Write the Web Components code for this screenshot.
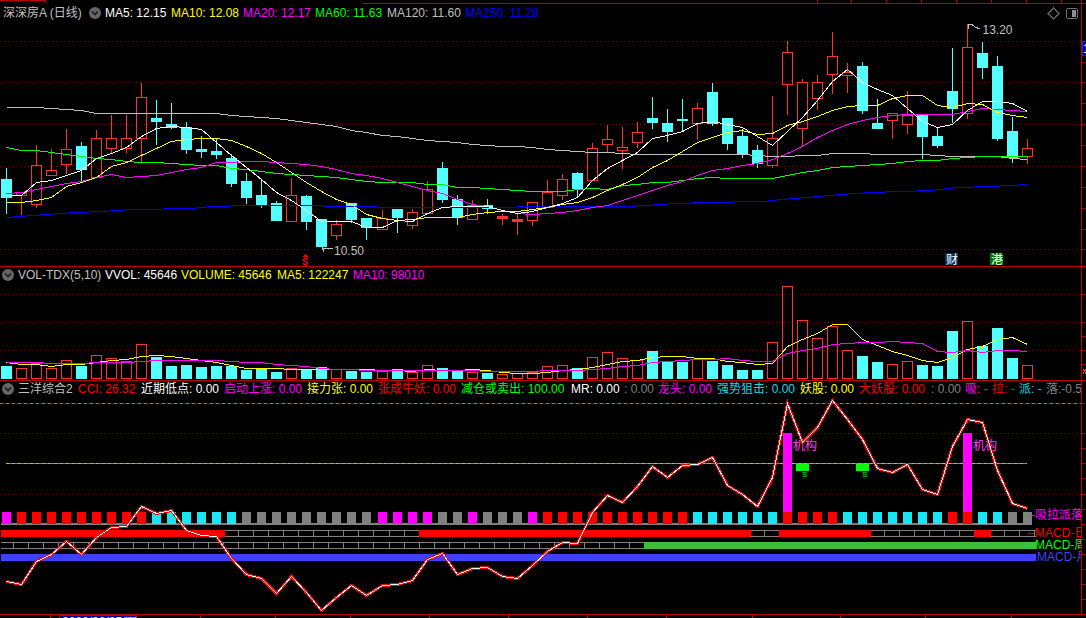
<!DOCTYPE html>
<html>
<head>
<meta charset="utf-8">
<title>深深房A</title>
<style>
	html, body { margin: 0; background: #000; }
</style>
</head>
<body>

<stock-chart>
	<kline-pane top="0" height="267">
		<legend-row pad="3" first="6">
			<legend-item w="86" color="#c0c0c0">深深房A (日线)</legend-item>
			<collapse-btn></collapse-btn>
			<legend-item w="66" color="#ffffff">MA5: 12.15</legend-item>
			<legend-item w="72" color="#ffff00">MA10: 12.08</legend-item>
			<legend-item w="72" color="#ff00ff">MA20: 12.17</legend-item>
			<legend-item w="72" color="#00ff00">MA60: 11.63</legend-item>
			<legend-item w="78" color="#c0c0c0">MA120: 11.60</legend-item>
			<legend-item w="80" color="#0000ff">MA250: 11.28</legend-item>
		</legend-row>
	</kline-pane>
	<vol-pane top="267" height="114">
		<legend-row pad="2" first="1">
			<collapse-btn></collapse-btn>
			<legend-item w="87" color="#c0c0c0">VOL-TDX(5,10)</legend-item>
			<legend-item w="76" color="#ffffff">VVOL: 45646</legend-item>
			<legend-item w="96" color="#ffff00">VOLUME: 45646</legend-item>
			<legend-item w="76" color="#ffff00">MA5: 122247</legend-item>
			<legend-item w="80" color="#ff00ff">MA10: 98010</legend-item>
		</legend-row>
	</vol-pane>
	<sanyang-pane top="381" height="233">
		<legend-row pad="2" first="1">
			<collapse-btn></collapse-btn>
			<legend-item w="60" color="#c0c0c0">三洋综合2</legend-item>
			<legend-item w="63" color="#ff0000">CCI: 26.32</legend-item>
			<legend-item w="83" color="#ffffff">近期低点: 0.00</legend-item>
			<legend-item w="83" color="#ff00ff">启动上涨: 0.00</legend-item>
			<legend-item w="71" color="#ffff00">接力张: 0.00</legend-item>
			<legend-item w="83" color="#ff0000">张成牛妖: 0.00</legend-item>
			<legend-item w="110" color="#00ff00">减仓或卖出: 100.00</legend-item>
			<legend-item w="53" color="#ffffff">MR: 0.00</legend-item>
			<legend-item w="34" color="#808080">: 0.00</legend-item>
			<legend-item w="59" color="#ff00ff">龙头: 0.00</legend-item>
			<legend-item w="83" color="#14d8e8">强势狙击: 0.00</legend-item>
			<legend-item w="59" color="#ffff00">妖股: 0.00</legend-item>
			<legend-item w="72" color="#ff0000">大妖股: 0.00</legend-item>
			<legend-item w="34" color="#808080">: 0.00</legend-item>
			<legend-item w="27" color="#ff00ff">吸: -</legend-item>
			<legend-item w="27" color="#ff0000">拉: -</legend-item>
			<legend-item w="27" color="#14d8e8">派: -</legend-item>
			<legend-item w="36" color="#808080">落:-0.5</legend-item>
		</legend-row>
	</sanyang-pane>
	<time-axis></time-axis>
</stock-chart>

<script>
const RED = '#ff3232';
const CYAN = '#54ffff';
const AXIS = '#c00000';
const GRID = '#8c0000';

// high, body top, body bottom, low, kind (0 cyan, 1 hollow red, 2 solid red)
const CANDLES = [
	[168,179,197,213,0],[192,192,195,214,1],[145,165,204,207,1],[149,170,175,175,1],[129,149,164,173,1],
	[142,146,169,180,0],[130,138,177,177,1],[115,138,148,153,1],[115,138,148,152,1],[83,97,138,162,1],
	[100,118,121,144,0],[103,124,127,128,0],[122,127,149,153,0],[136,149,151,157,0],[139,151,154,158,0],
	[154,158,183,186,0],[173,181,197,203,0],[180,195,205,207,0],[201,203,220,220,0],[178,195,221,221,1],
	[195,196,221,229,0],[219,219,246,246,0],[220,224,235,239,1],[203,203,219,222,0],[218,218,227,239,0],
	[210,218,229,229,1],[209,209,217,232,0],[209,212,225,228,1],[181,189,213,213,1],[162,168,199,202,0],
	[195,199,217,224,0],[200,205,219,219,1],[199,205,208,213,0],[214,216,218,224,2],[213,219,221,234,2],
	[202,202,220,225,1],[180,192,207,207,1],[174,179,195,199,1],[172,173,188,197,0],[143,148,180,180,1],
	[125,139,144,152,1],[127,147,150,168,1],[122,132,142,147,1],[97,118,122,128,0],[109,123,131,141,0],
	[99,119,120,130,0],[103,108,123,139,1],[83,92,123,125,0],[118,118,143,149,0],[129,136,153,157,0],
	[145,150,163,167,0],[96,138,165,167,1],[41,52,84,114,1],[79,82,128,145,1],[75,82,98,109,1],
	[32,56,74,93,1],[63,72,75,92,1],[62,66,110,113,0],[99,123,128,128,0],[113,113,120,138,1],
	[91,115,124,133,1],[115,115,136,158,0],[127,136,145,147,0],[48,91,108,122,0],[24,47,113,118,1],
	[42,53,67,78,0],[56,66,138,140,0],[117,131,157,162,0],[139,148,156,163,1],
];

const MA5 = [195,195,182,180,175,170,158,153,147,136,128,126,127,129,142,155,167,179,192,200,210,221,221,221,227,227,220,221,213,207,206,206,206,210,213,211,207,203,197,180,168,160,152,138,135,131,123,121,124,127,136,145,131,117,100,81,69,82,89,95,108,121,127,124,110,101,101,103,111];
const MA10 = [202,202,200,197,186,182,177,166,162,155,148,141,139,138,138,140,146,153,162,172,182,191,199,204,214,218,220,219,217,217,217,214,212,211,211,209,207,204,202,197,190,184,177,167,160,151,142,137,132,130,134,133,125,121,116,110,106,105,105,98,95,95,105,107,103,104,112,115,117];
const MA20 = [193,192,189,186,183,181,177,174,177,176,175,172,169,167,162,162,161,161,162,163,164,166,169,173,175,178,182,186,190,193,199,204,206,210,213,214,213,212,210,207,205,200,195,190,185,181,175,170,168,165,163,159,153,146,137,130,124,120,117,115,114,114,114,114,111,108,109,110,111];
const MA60 = [147,150,150,152,154,156,158,159,161,162,162,163,164,165,165,168,169,171,173,174,175,176,177,179,181,182,182,182,184,184,187,187,188,189,190,191,191,191,189,188,189,185,184,182,182,180,178,177,178,178,178,178,175,172,170,167,166,165,164,163,161,160,160,158,157,156,156,156,156];
const MA120 = [107,107,107,108,109,110,113,113,113,113,113,113,113,113,113,115,116,117,118,120,122,124,126,130,132,135,136,138,140,141,142,144,145,146,146,147,149,150,151,152,152,153,154,154,154,154,154,154,154,154,155,156,156,155,155,153,153,153,154,154,154,154,155,156,156,156,156,158,159];

// blue line has long flat steps, so it keeps free x coordinates
const MA250 = '6,217.5 60,213.5 75,212.5 103,211.5 133,209.5 193,208.5 210,206.5 253,205.5 297,205.5 405,207.5 628,206.5 662,204.5 675,203.5 705,202.5 764,201.5 781,199.5 807,197.5 841,194.5 871,192.5 901,191.5 931,190.5 957,187.5 991,186.5 1027,184.5';

const VOL = [
	[366,0],[368,1],[363,1],[368,1],[360,1],[366,0],[355,1],[358,1],[361,1],[344,1],
	[357,0],[366,0],[365,0],[367,0],[366,0],[366,0],[370,0],[369,0],[372,0],[368,1],
	[370,0],[367,0],[369,1],[371,0],[372,0],[371,1],[369,0],[372,1],[365,1],[368,0],
	[370,0],[372,1],[373,0],[374,1],[373,1],[372,1],[366,1],[365,1],[368,0],[357,1],
	[352,1],[358,1],[360,1],[351,0],[362,0],[362,0],[359,1],[361,0],[365,0],[370,0],
	[370,0],[342,1],[286,1],[320,1],[338,1],[326,1],[350,1],[356,0],[362,0],[364,1],
	[361,1],[365,0],[366,0],[331,0],[321,1],[346,0],[328,0],[358,0],[365,1],
];
// volume averages were read in 3x zoom units, scale() brings them to pixels
const VOL_MA5 = [518,522,522,528,523,522,517,512,508,499,496,500,505,510,518,527,534,535,534,537,537,537,537,539,539,542,542,543,539,540,540,539,542,546,550,550,546,541,539,533,524,513,510,503,499,499,505,505,514,518,524,519,470,449,430,404,402,448,467,483,497,510,517,501,478,468,447,442,462];
const VOL_MA10 = [518,518,518,519,519,520,517,516,516,514,510,510,510,510,512,513,517,518,522,525,530,535,537,538,541,541,541,541,540,540,540,541,543,544,545,545,542,542,542,538,534,530,527,517,514,512,509,507,506,510,515,514,490,482,475,464,461,457,457,455,456,460,483,488,482,486,482,482,484];

const CCI = [615,625,555,535,495,534,485,453,451,391,412,403,463,478,482,548,596,608,653,601,650,704,665,627,657,628,625,614,550,531,595,578,573,600,608,568,525,498,502,410,357,380,332,270,305,267,265,245,327,354,392,305,82,200,155,73,130,190,277,290,265,340,354,210,130,140,283,383,397];

// block colours for 吸拉派落: m magenta, r red, c cyan, g gray
const BLOCKS = 'mrrrrrrrrrccccccggggggggg' + 'mmmmggmgggm' + 'rrrrrrrrrr' + 'cccccc' + 'rrrr' + 'ccccccc' + 'rr' + 'cc' + 'gg';
const BLOCK_COLOR = { m: '#ff00ff', r: '#ff0000', c: '#19e6f0', g: '#808080' };

const cx = (i) => Math.round(6 + 15.02 * i);

const polyline = (values, color, width = 1) => {
	const points = values.map((y, i) => `${cx(i) + 0.5},${Math.floor(y) + 0.5}`).join(' ');
	return `<polyline points="${points}" fill="none" stroke="${color}" stroke-width="${width}"/>`;
};

const dotted = (y, x1 = 0, x2 = 1081) => `<line x1="${x1}" x2="${x2}" y1="${y + 0.5}" y2="${y + 0.5}" stroke="${GRID}" stroke-dasharray="1 3"/>`;

const rect = (x, y, w, h, fill) => `<rect x="${x}" y="${y}" width="${w}" height="${h}" fill="${fill}"/>`;

const hollow = (x, y, w, h, color) => `<rect x="${x + 0.5}" y="${y + 0.5}" width="${w - 1}" height="${h - 1}" fill="none" stroke="${color}"/>`;

const ticks = (list, len = 4) => list.map((y) => rect(1081, y, len, 1, AXIS)).join('');

const legendTemplate = document.createElement('template');
legendTemplate.innerHTML = `
	<style>
		:host {
			display: block;
			flex: 0 0 var(--w, auto);
			color: var(--c, #c0c0c0);
			white-space: nowrap;
			overflow: hidden;
		}
	</style>
	<slot></slot>
`;

class LegendItem extends HTMLElement {

	constructor() {
		super();

		this.attachShadow({ mode: 'open' });
		this.shadowRoot.appendChild(legendTemplate.content.cloneNode(true));
	}

	connectedCallback() {
		this.style.setProperty('--w', this.getAttribute('w') + 'px');
		this.style.setProperty('--c', this.getAttribute('color'));
	}

}

const rowTemplate = document.createElement('template');
rowTemplate.innerHTML = `
	<style>
		:host {
			display: flex;
			align-items: center;
			width: 1081px;
			height: 14px;
			box-sizing: content-box;
			overflow: hidden;
			font: 12px/14px "Liberation Sans", "Noto Sans CJK SC", sans-serif;
		}
	</style>
	<slot></slot>
`;

class LegendRow extends HTMLElement {

	constructor() {
		super();

		this.attachShadow({ mode: 'open' });
		this.shadowRoot.appendChild(rowTemplate.content.cloneNode(true));
	}

	connectedCallback() {
		this.style.paddingLeft = this.getAttribute('pad') + 'px';
		this.style.paddingTop = this.getAttribute('first') + 'px';
		this.style.width = (1081 - Number(this.getAttribute('pad'))) + 'px';
	}

}

const btnTemplate = document.createElement('template');
btnTemplate.innerHTML = `
	<style>
		:host {
			display: block;
			flex: 0 0 12px;
			height: 12px;
			margin-right: 4px;
		}
		svg { display: block; }
	</style>
	<svg width="12" height="12" viewBox="0 0 12 12">
		<circle cx="6" cy="6" r="6" fill="#666"/>
		<path d="M3 4.5 L6 7.5 L9 4.5" fill="none" stroke="#1c1c1c" stroke-width="1.6"/>
	</svg>
`;

class CollapseBtn extends HTMLElement {

	constructor() {
		super();

		this.attachShadow({ mode: 'open' });
		this.shadowRoot.appendChild(btnTemplate.content.cloneNode(true));
	}

}

const paneTemplate = document.createElement('template');
paneTemplate.innerHTML = `
	<style>
		:host {
			display: grid;
			width: 1086px;
			overflow: hidden;
		}
		svg, .legend {
			grid-area: 1 / 1;
		}
		svg {
			display: block;
			shape-rendering: crispEdges;
		}
		svg text {
			font: 12px "Liberation Sans", "Noto Sans CJK SC", sans-serif;
		}
		.legend {
			align-self: start;
		}
	</style>
	<svg width="1086" xmlns="http://www.w3.org/2000/svg"></svg>
	<div class="legend"><slot></slot></div>
`;

class ChartPane extends HTMLElement {

	constructor() {
		super();

		this.attachShadow({ mode: 'open' });
		this.shadowRoot.appendChild(paneTemplate.content.cloneNode(true));
		this.svg = this.shadowRoot.querySelector('svg');
	}

	connectedCallback() {
		const top = Number(this.getAttribute('top'));
		const height = Number(this.getAttribute('height'));

		this.style.height = height + 'px';
		this.svg.setAttribute('height', height);
		this.svg.setAttribute('viewBox', `0 ${top} 1086 ${height}`);
		this.svg.innerHTML = this.draw() + rect(1081, top, 1, height, AXIS);
	}

	draw() {
		return '';
	}

}

class KlinePane extends ChartPane {

	draw() {
		let out = '';

		out += rect(0, 0, 45, 1, AXIS) + rect(45, 0, 1, 3, AXIS);
		out += rect(362, 3, 724, 1, AXIS);
		for (const x of [817, 851, 886, 921, 956, 991, 1026, 1061]) out += rect(x, 0, 1, 3, AXIS);
		out += ticks([62, 82, 103, 124, 145, 166, 187, 208, 229, 249]);
		out += rect(0, 266, 1086, 1, AXIS);

		for (const y of [41, 82, 124, 166, 249]) out += dotted(y);

		CANDLES.forEach(([high, top, bottom, low, kind], i) => {
			const x = cx(i);
			const color = kind === 0 ? CYAN : RED;

			out += rect(x, high, 1, top - high, color);
			out += rect(x, bottom, 1, low - bottom + 1, color);

			if (kind === 1) {
				out += hollow(x - 5, top, 11, bottom - top + 1, color);
			} else {
				out += rect(x - 5, top, 11, bottom - top + 1, color);
			}
		});

		out += polyline(MA120, '#c0c0c0');
		out += polyline(MA60, '#00ff00');
		out += `<polyline points="${MA250}" fill="none" stroke="#0000ff"/>`;
		out += polyline(MA20, '#ff00ff');
		out += polyline(MA10, '#ffff00');
		out += polyline(MA5, '#ffffff');

		// high and low flags
		out += `<path d="M968.5 29 V24.5 H972 L975 27 L980 29" fill="none" stroke="#c0c0c0"/>`;
		out += `<text x="982.5" y="34" fill="#c0c0c0">13.20</text>`;
		out += `<path d="M322 247 L324 252 M322 248 L333 249" fill="none" stroke="#c0c0c0"/>`;
		out += `<text x="334" y="255" fill="#c0c0c0">10.50</text>`;

		// buy arrow
		out += `<path d="M302.5 257 L305.5 254 L308.5 257 Z" fill="#ff0000"/>`;
		out += `<text x="302" y="265" fill="#ff0000" style="font:bold 10px 'Liberation Mono', monospace">S</text>`;

		// news badges
		out += rect(945, 253, 13, 12, '#0a2f5f') + `<text x="946" y="264" fill="#fff">财</text>`;
		out += rect(990, 253, 13, 12, '#007800') + `<text x="991" y="264" fill="#fff">港</text>`;

		// toolbar icons
		out += `<path d="M1053.5 8 L1059 13.5 L1053.5 19 L1048 13.5 Z" fill="none" stroke="#606060"/>`;
		out += `<rect x="1066.5" y="8.5" width="11" height="10" rx="2" fill="#000" stroke="#707070"/>`;
		out += rect(1072, 10, 4, 7, '#909090');

		// price tag on the axis
		out += `<rect x="1082.5" y="41.5" width="5" height="14" fill="#00008c" stroke="#2020c0"/>`;
		out += `<text x="1083" y="53" fill="#fff">1</text>`;

		return out;
	}

}

class VolPane extends ChartPane {

	draw() {
		let out = '';

		out += ticks([294, 322, 336, 350, 364]);
		out += rect(0, 380, 1086, 1, AXIS);

		for (const y of [294, 322, 350]) out += dotted(y);

		VOL.forEach(([top, kind], i) => {
			const x = cx(i);

			if (kind === 1) {
				out += hollow(x - 5, top, 11, 379 - top, RED);
			} else {
				out += rect(x - 5, top, 11, 379 - top, CYAN);
			}
		});

		const scale = (list) => list.map((v) => 190 + v / 3);
		out += polyline(scale(VOL_MA5), '#ffff00');
		out += polyline(scale(VOL_MA10), '#ff00ff');

		// small cross on the axis
		out += `<path d="M1083 369 L1086 374 M1086 369 L1083 374" stroke="#ff3232"/>`;

		return out;
	}

}

class SanyangPane extends ChartPane {

	bricks(y, x1, x2) {
		let out = rect(x1, y, x2 - x1, 1, '#808080') + rect(x1, y + 6, x2 - x1, 1, '#808080');

		for (let i = -1; i < 69; i++) {
			const x = cx(i) + 7;
			if (x >= x1 && x < x2) out += rect(x, y, 1, 6, '#808080');
		}

		return out;
	}

	draw() {
		let out = '';

		out += ticks([403, 433, 448, 463, 478, 494, 509, 524, 539, 554, 569, 584, 599]);

		// reference levels
		out += `<line x1="0" x2="1081" y1="403.5" y2="403.5" stroke="#900000"/>`;
		out += `<line x1="0" x2="1081" y1="403.5" y2="403.5" stroke="#8a8a20" stroke-dasharray="3 3"/>`;
		out += dotted(433) + dotted(494);
		out += `<line x1="6" x2="1027" y1="463.5" y2="463.5" stroke="#30c030"/>`;
		out += `<line x1="6" x2="1027" y1="463.5" y2="463.5" stroke="#c8c000" stroke-dasharray="3 3"/>`;

		// 机构 columns
		out += rect(cx(52) - 4, 433, 9, 79, '#ff00ff');
		out += rect(cx(64) - 4, 433, 9, 79, '#ff00ff');
		out += `<text x="793" y="450" fill="#ff40ff">机构</text>`;
		out += `<text x="973" y="450" fill="#ff40ff">机构</text>`;

		// sell marks
		for (const x of [796, 856]) {
			out += rect(x, 464, 13, 7, '#00ff00');
			out += `<text x="${x + 6}" y="477" fill="#00ff00" style="font-size:8px">S</text>`;
		}

		// block row
		out += rect(1, 523, 1031, 2, '#808080');
		[...BLOCKS].forEach((key, i) => {
			out += rect(cx(i) - 4, 512, 9, 12, BLOCK_COLOR[key]);
		});

		// MACD day row
		out += this.bricks(530, 225, 419) + this.bricks(530, 751, 779) + this.bricks(530, 871, 974) + this.bricks(530, 991, 1036);
		out += rect(1, 530, 224, 7, '#ff0000') + rect(419, 530, 332, 7, '#ff0000');
		out += rect(779, 530, 92, 7, '#ff0000') + rect(974, 530, 17, 7, '#ff0000');

		// MACD week row
		out += this.bricks(542, 1, 644);
		out += rect(644, 542, 392, 7, '#3cbe3c');

		// MACD month row
		out += rect(1, 554, 1035, 7, '#4040ff');

		const cci = CCI.map((v) => 376 + v / 3);
		out += polyline(cci, '#ff0000', 3);
		out += polyline(cci, '#ffffff', 1);

		out += `<g clip-path="url(#plot)">`;
		out += `<clipPath id="plot"><rect x="0" y="381" width="1081" height="233"/></clipPath>`;
		out += `<text x="1027" y="519" fill="#ff00ff">--吸拉派落</text>`;
		out += `<text x="1027" y="537" fill="#ff0000">--MACD-日</text>`;
		out += `<text x="1027" y="549" fill="#00ff00">--MACD-周</text>`;
		out += `<text x="1037" y="561" fill="#4040ff">MACD-月</text>`;
		out += `</g>`;

		return out;
	}

}

const axisTemplate = document.createElement('template');
axisTemplate.innerHTML = `
	<style>
		:host {
			display: block;
			width: 1086px;
			height: 4px;
			overflow: hidden;
		}
		svg {
			display: block;
			shape-rendering: crispEdges;
		}
		text {
			font: 12px "Liberation Sans", sans-serif;
		}
	</style>
	<svg width="1086" height="4" viewBox="0 614 1086 4">
		<rect x="0" y="614" width="1086" height="1" fill="#c00000"/>
		<rect x="59.5" y="615.5" width="77" height="6" fill="#000090" stroke="#c00000"/>
		<text x="62" y="626" fill="#e0e0e0">2020/06/05/五</text>
		<g id="marks" fill="#c00000"></g>
	</svg>
`;

class TimeAxis extends HTMLElement {

	constructor() {
		super();

		this.attachShadow({ mode: 'open' });
		this.shadowRoot.appendChild(axisTemplate.content.cloneNode(true));
	}

	connectedCallback() {
		const marks = this.shadowRoot.querySelector('#marks');
		marks.innerHTML = [50, 200, 275, 350, 429, 508, 587, 666, 752, 840, 925, 1011]
			.map((x) => `<rect x="${x}" y="615" width="1" height="3"/>`).join('');
	}

}

const chartTemplate = document.createElement('template');
chartTemplate.innerHTML = `
	<style>
		:host {
			display: flex;
			flex-direction: column;
			width: 1086px;
			height: 618px;
			background: #000;
			overflow: hidden;
		}
	</style>
	<slot></slot>
`;

class StockChart extends HTMLElement {

	constructor() {
		super();

		this.attachShadow({ mode: 'open' });
		this.shadowRoot.appendChild(chartTemplate.content.cloneNode(true));
	}

}

customElements.define('legend-item', LegendItem);
customElements.define('legend-row', LegendRow);
customElements.define('collapse-btn', CollapseBtn);
customElements.define('kline-pane', KlinePane);
customElements.define('vol-pane', VolPane);
customElements.define('sanyang-pane', SanyangPane);
customElements.define('time-axis', TimeAxis);
customElements.define('stock-chart', StockChart);
</script>
</body>
</html>
